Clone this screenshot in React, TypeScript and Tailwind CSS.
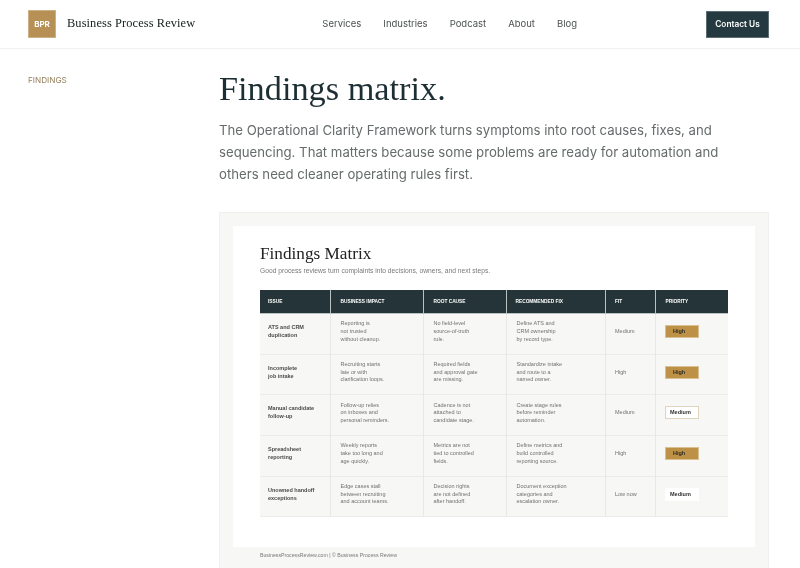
const navLinks = ['Services', 'Industries', 'Podcast', 'About', 'Blog'];

type Row = {
  issue: string[];
  impact: string[];
  cause: string[];
  fix: string[];
  fit: string;
  priority: 'high' | 'medium' | 'plain';
};

const rows: Row[] = [
  {
    issue: ['ATS and CRM', 'duplication'],
    impact: ['Reporting is', 'not trusted', 'without cleanup.'],
    cause: ['No field-level', 'source-of-truth', 'rule.'],
    fix: ['Define ATS and', 'CRM ownership', 'by record type.'],
    fit: 'Medium',
    priority: 'high',
  },
  {
    issue: ['Incomplete', 'job intake'],
    impact: ['Recruiting starts', 'late or with', 'clarification loops.'],
    cause: ['Required fields', 'and approval gate', 'are missing.'],
    fix: ['Standardize intake', 'and route to a', 'named owner.'],
    fit: 'High',
    priority: 'high',
  },
  {
    issue: ['Manual candidate', 'follow-up'],
    impact: ['Follow-up relies', 'on inboxes and', 'personal reminders.'],
    cause: ['Cadence is not', 'attached to', 'candidate stage.'],
    fix: ['Create stage rules', 'before reminder', 'automation.'],
    fit: 'Medium',
    priority: 'medium',
  },
  {
    issue: ['Spreadsheet', 'reporting'],
    impact: ['Weekly reports', 'take too long and', 'age quickly.'],
    cause: ['Metrics are not', 'tied to controlled', 'fields.'],
    fix: ['Define metrics and', 'build controlled', 'reporting source.'],
    fit: 'High',
    priority: 'high',
  },
  {
    issue: ['Unowned handoff', 'exceptions'],
    impact: ['Edge cases stall', 'between recruiting', 'and account teams.'],
    cause: ['Decision rights', 'are not defined', 'after handoff.'],
    fix: ['Document exception', 'categories and', 'escalation owner.'],
    fit: 'Low now',
    priority: 'plain',
  },
];

const Lines = ({ lines }: { lines: string[] }) => (
  <>
    {lines.map((line) => (
      <div key={line}>{line}</div>
    ))}
  </>
);

const Priority = ({ level }: { level: Row['priority'] }) => {
  if (level === 'high') {
    return (
      <div className="w-[33.5px] h-[13px] bg-[#bd9146] border border-[#d9c193] pl-[7px] leading-[11px] font-bold text-[#2a2a24]">
        High
      </div>
    );
  }
  return (
    <div
      className={`w-[33.5px] h-[13px] -mt-[1px] bg-white pl-[4px] leading-[10px] font-bold text-[#2f3230] border ${
        level === 'medium' ? 'border-[#e0d4bd]' : 'border-white'
      }`}
    >
      Medium
    </div>
  );
};

const headCell = 'text-left align-middle font-bold border-l border-b border-[#b9c2c0] first:border-l-0';
const bodyCell = 'align-middle pb-[4px] border-l border-[#e8e9e4] first:border-l-0 text-[#70736f]';

export default function App() {
  return (
    <div className="h-[568px] overflow-hidden bg-white font-['Inter',sans-serif] blur-[0.25px]">
      <header className="h-[49px] border-b border-[#f2f1ee] pl-[28px] pr-[31px] flex items-center">
        <div className="w-[28px] h-[28px] bg-[#b79055] border border-[#cdb086] flex items-center justify-center text-white text-[8px] font-bold">
          BPR
        </div>
        <div className="ml-[11px] font-['Liberation_Serif',serif] text-[12.4px] font-normal text-[#14201f] -mt-[2px] tracking-[0.1px]">
          Business Process Review
        </div>
        <nav className="ml-auto mr-[129px] flex gap-[22px] text-[9.5px] text-[#4c5152] mt-[1px]">
          {navLinks.map((link) => (
            <span key={link}>{link}</span>
          ))}
        </nav>
        <button className="w-[63px] h-[27px] bg-[#253a40] border border-[#5d6e72] text-white text-[8.3px] font-semibold">
          Contact Us
        </button>
      </header>

      <main className="flex pl-[28px]">
        <div className="w-[191px] pt-[25px] text-[8.2px] leading-[12px] text-[#96805f]">FINDINGS</div>
        <div className="w-[550px]">
          <h1 className="pt-[19px] font-['Liberation_Serif',serif] text-[34.3px] leading-[40px] text-[#1d2f35]">
            Findings matrix.
          </h1>
          <p className="mt-[11px] max-w-[510px] text-[13.2px] leading-[22px] text-[#666b6c]">
            The Operational Clarity Framework turns symptoms into root causes, fixes, and sequencing. That matters because some
            problems are ready for automation and others need cleaner operating rules first.
          </p>

          <div className="mt-[27px] bg-[#f7f7f5] border border-[#f0f0ec] p-[13px] pb-0">
            <div className="bg-white h-[321px] pt-[18px] px-[27px]">
              <h2 className="font-['Liberation_Serif',serif] text-[17.2px] leading-[20px] text-[#222]">Findings Matrix</h2>
              <p className="mt-[2px] font-['Liberation_Sans',sans-serif] text-[6.7px] leading-[9px] text-[#777a77]">
                Good process reviews turn complaints into decisions, owners, and next steps.
              </p>
              <table className="mt-[15px] w-[468px] table-fixed border-collapse font-['Liberation_Sans',sans-serif] text-[5.5px] leading-[7.8px]">
                <colgroup>
                  <col className="w-[70px]" />
                  <col className="w-[93px]" />
                  <col className="w-[83px]" />
                  <col className="w-[99.5px]" />
                  <col className="w-[49.5px]" />
                  <col className="w-[73px]" />
                </colgroup>
                <thead>
                  <tr className="h-[23.5px] bg-[#243439] text-white text-[4.8px]">
                    <th className={`${headCell} pl-[8px]`}>ISSUE</th>
                    <th className={`${headCell} pl-[10px]`}>BUSINESS IMPACT</th>
                    <th className={`${headCell} pl-[10px]`}>ROOT CAUSE</th>
                    <th className={`${headCell} pl-[9px]`}>RECOMMENDED FIX</th>
                    <th className={`${headCell} pl-[9px]`}>FIT</th>
                    <th className={`${headCell} pl-[10px]`}>PRIORITY</th>
                  </tr>
                </thead>
                <tbody className="bg-[#f7f7f5]">
                  {rows.map((row) => (
                    <tr key={row.issue[0]} className="h-[40.7px] border-b border-[#ecece8]">
                      <td className={`${bodyCell} pl-[8px] font-bold !text-[#4a4c49]`}>
                        <Lines lines={row.issue} />
                      </td>
                      <td className={`${bodyCell} pl-[10px]`}>
                        <Lines lines={row.impact} />
                      </td>
                      <td className={`${bodyCell} pl-[10px]`}>
                        <Lines lines={row.cause} />
                      </td>
                      <td className={`${bodyCell} pl-[10px]`}>
                        <Lines lines={row.fix} />
                      </td>
                      <td className={`${bodyCell} pl-[9px]`}>{row.fit}</td>
                      <td className={`${bodyCell} pl-[9.5px]`}>
                        <Priority level={row.priority} />
                      </td>
                    </tr>
                  ))}
                </tbody>
              </table>
            </div>
            <div className="pl-[27px] pt-[4px] pb-[20px] font-['Liberation_Sans',sans-serif] text-[5.2px] leading-[8px] text-[#777a77]">
              BusinessProcessReview.com | © Business Process Review
            </div>
          </div>
        </div>
      </main>
    </div>
  );
}
